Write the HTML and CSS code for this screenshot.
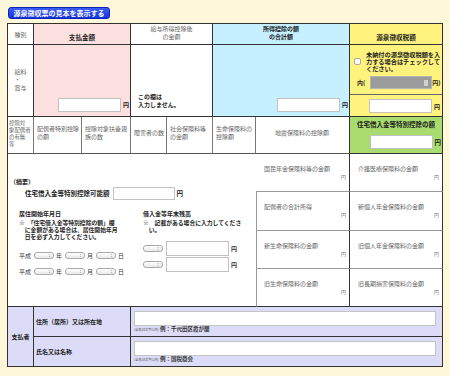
FILE: index.html
```html
<!DOCTYPE html>
<html lang="ja">
<head>
    <meta charset="UTF-8">
    <meta name="viewport" content="width=device-width, initial-scale=1.0">
    <title>源泉徴収票の入力</title>
    <link rel="stylesheet" href="styles.css">
</head>
<body>
    <button class="sample-btn" type="button">源泉徴収票の見本を表示する</button>

    <div class="slip">
        <!-- 見出し -->
        <div class="cell head gray">種別</div>
        <div class="cell head low bold pink c2">支払金額</div>
        <div class="cell head high gray c2">給与所得控除後<br>の金額</div>
        <div class="cell head high bold blue c2">所得控除の額<br>の合計額</div>
        <div class="cell head low bold yellow">源泉徴収税額</div>

        <!-- 給料・賞与 -->
        <div class="cell kind gray">給料<br>・<br>賞与</div>
        <div class="cell amount pink c2"><input class="amt" type="text"><span class="yen">円</span></div>
        <div class="cell noinput bold c2">この欄は<br>入力しません。</div>
        <div class="cell amount blue c2"><input class="amt" type="text"><span class="yen">円</span></div>
        <div class="cell tax yellow">
            <div class="tax-top">
                <label class="unpaid">
                    <input class="check" type="checkbox">
                    <span class="bold">未納付の源泉徴収税額を入力する場合はチェックしてください。</span>
                </label>
                <div class="unpaid-amt bold">内(<input class="amt locked" type="text" disabled><span>円)</span></div>
            </div>
            <div class="tax-bottom"><input class="amt" type="text"><span class="yen">円</span></div>
        </div>

        <!-- 控除の内訳 -->
        <div class="cell sub tight">控除対<br>象配偶者<br>の有無<br>等</div>
        <div class="cell sub">配偶者特別控除<br>の額</div>
        <div class="cell sub">控除対象扶養親<br>族の数</div>
        <div class="cell sub">障害者の数</div>
        <div class="cell sub">社会保険料等<br>の金額</div>
        <div class="cell sub">生命保険料の<br>控除額</div>
        <div class="cell sub center">地震保険料の控除額</div>
        <div class="cell loan green">
            <div class="bold">住宅借入金等特別控除の額</div>
            <div class="loan-input"><input class="amt" type="text"><span class="yen">円</span></div>
        </div>

        <!-- 摘要 -->
        <div class="cell summary">
            <div class="bold">（摘要）</div>
            <div class="sum-line">
                <span class="bold">住宅借入金等特別控除可能額</span>
                <input class="amt" type="text">
                <span class="yen">円</span>
            </div>
            <div class="sum-cols">
                <div class="sum-col left">
                    <div class="bold">居住開始年月日</div>
                    <p class="note">※　「住宅借入金等特別控除の額」欄に金額がある場合は、居住開始年月日を必ず入力してください。</p>
                    <div class="pick-row">平成<span class="popup"></span>年<span class="popup"></span>月<span class="popup"></span>日</div>
                    <div class="pick-row">平成<span class="popup"></span>年<span class="popup"></span>月<span class="popup"></span>日</div>
                </div>
                <div class="sum-col">
                    <div class="bold">借入金等年末残高</div>
                    <p class="note">※　記載がある場合に入力してください。</p>
                    <div class="pick-row"><span class="popup"></span><input class="amt mid" type="text"><span class="yen">円</span></div>
                    <div class="pick-row"><span class="popup"></span><input class="amt mid" type="text"><span class="yen">円</span></div>
                </div>
            </div>
        </div>
        <div class="cell ins first">国民年金保険料等の金額<span class="yen-s">円</span></div>
        <div class="cell ins outer">介護医療保険料の金額<span class="yen-s">円</span></div>
        <div class="cell ins">配偶者の合計所得<span class="yen-s">円</span></div>
        <div class="cell ins outer">新個人年金保険料の金額<span class="yen-s">円</span></div>
        <div class="cell ins">新生命保険料の金額<span class="yen-s">円</span></div>
        <div class="cell ins outer">旧個人年金保険料の金額<span class="yen-s">円</span></div>
        <div class="cell ins last">旧生命保険料の金額<span class="yen-s">円</span></div>
        <div class="cell ins outer last">旧長期損害保険料の金額<span class="yen-s">円</span></div>

        <!-- 支払者 -->
        <div class="cell payer-head bold">支払者</div>
        <div class="cell payer-label bold c2">住所（居所）又は所在地</div>
        <div class="cell payer-field c5">
            <input class="text-field" type="text">
            <div class="hint"><span class="limit">[全角28文字以内]</span> 例：千代田区霞が関</div>
        </div>
        <div class="cell payer-label bold c2">氏名又は名称</div>
        <div class="cell payer-field c5">
            <input class="text-field" type="text">
            <div class="hint"><span class="limit">[全角28文字以内]</span> 例：国税商会</div>
        </div>
    </div>
</body>
</html>
```

FILE: styles.css
```css
* {
    box-sizing: border-box;
}

body {
    margin: 0;
    padding: 7px 0 0 7px;
    background-color: #fff7da;
    font-family: "Noto Sans CJK JP", "Noto Sans", sans-serif;
    font-size: 6px;
    line-height: 7px;
    color: #222;
}

.sample-btn {
    display: block;
    width: 102px;
    height: 12px;
    margin: 0 0 4px 1px;
    padding: 0;
    border: 1px solid #0b22b8;
    border-radius: 3px;
    background: linear-gradient(#3b5df6, #1434e0);
    color: #fff;
    font-family: inherit;
    font-size: 7px;
    font-weight: bold;
    line-height: 10px;
}

.slip {
    display: grid;
    grid-template-columns: 26px 48px 49px 36px 46px 43px 94px 93px;
    grid-template-rows: 21px 72px 37px 38px 39px 38px 38px 30px 30px;
    width: 436px;
    border-top: 1px solid #333;
    border-left: 1px solid #333;
    background: #fff;
}

.cell {
    display: flex;
    border-right: 1px solid #333;
    border-bottom: 1px solid #333;
    min-width: 0;
}

.c2 { grid-column: span 2; }
.c5 { grid-column: span 5; }

.bold { font-weight: bold; color: #222; }
.gray { color: #666; }

.pink { background: #fcdfdf; }
.blue { background: #c6f0ff; }
.yellow { background: #fff37e; }
.green { background: #a8dc6e; }

input {
    margin: 0;
    padding: 0;
    font: inherit;
}

.amt {
    width: 63px;
    height: 14px;
    border: 1px solid #c2c2c2;
    background: #fff;
}

.amt.locked {
    width: 62px;
    height: 13px;
    background: #9b9b9b linear-gradient(#d0d0d0, #d0d0d0) no-repeat right 3px center / 4px 6px;
    border-color: #b5b5b5;
}

.amt.mid {
    height: 15px;
}

.yen {
    margin-left: 2px;
    font-weight: bold;
}

/* 見出し */
.head {
    align-items: center;
    justify-content: center;
    text-align: center;
}

.head.low { padding-top: 7px; font-size: 6.6px; }
.head.high { padding-bottom: 3px; line-height: 8px; }

.kind {
    flex-direction: column;
    justify-content: center;
    align-items: center;
    line-height: 8px;
    padding-bottom: 1px;
}

.amount {
    align-items: flex-end;
    justify-content: flex-end;
    padding: 0 1px 4px 0;
}

.amount .yen {
    line-height: 14px;
}

.noinput {
    align-items: flex-end;
    padding: 0 0 7px 7px;
    line-height: 8px;
}

/* 源泉徴収税額 */
.tax {
    flex-direction: column;
}

.tax-top {
    height: 50px;
    padding: 6px 0 0 4px;
    border-bottom: 1px solid #666;
}

.unpaid {
    display: flex;
    align-items: center;
    gap: 5px;
    font-size: 6.2px;
}

.unpaid span {
    width: 76px;
}

.check {
    appearance: none;
    width: 7px;
    height: 7px;
    margin: 0;
    border: 1px solid #aaa;
    border-radius: 2px;
    background: #fff;
}

.unpaid-amt {
    display: flex;
    align-items: center;
    margin-top: 4px;
    padding-left: 3px;
}

.unpaid-amt .amt {
    margin-left: 5px;
}

.tax-bottom {
    flex: 1;
    display: flex;
    align-items: center;
    justify-content: flex-end;
    padding: 1px 2px 0 0;
}

/* 控除の内訳 */
.sub {
    align-items: center;
    padding: 0 1px 4px 3px;
    color: #666;
    border-right-color: #777;
    border-bottom-color: #555;
    line-height: 8px;
}

.sub.tight {
    padding-left: 1px;
    padding-bottom: 3px;
    font-size: 5.4px;
    line-height: 7px;
}

.sub.center {
    justify-content: center;
    padding-left: 0;
    border-right-color: #333;
}

.loan {
    flex-direction: column;
    align-items: center;
    padding-top: 4px;
    font-size: 6.5px;
}

.loan-input {
    display: flex;
    align-items: center;
    align-self: flex-end;
    margin-top: 7px;
    padding-right: 1px;
}

/* 摘要 */
.summary {
    grid-column: 1 / 7;
    grid-row: 4 / 8;
    flex-direction: column;
    padding: 24px 0 0 2px;
    border-right: none;
}

.sum-line {
    display: flex;
    align-items: center;
    margin: 2px 0 0 15px;
    font-size: 6.5px;
}

.sum-line .amt {
    width: 62px;
    height: 13px;
    margin-left: 3px;
}

.sum-cols {
    display: flex;
    margin: 10px 0 0 9px;
}

.sum-col.left {
    width: 124px;
}

.note {
    width: 17.3em;
    margin: 2px 0 0;
    padding-left: 1em;
    text-indent: -1em;
    font-size: 5.8px;
    line-height: 7px;
    font-weight: bold;
}

.pick-row {
    display: flex;
    align-items: center;
    height: 16px;
    color: #333;
}

.note + .pick-row {
    margin-top: 7px;
}

.popup {
    position: relative;
    width: 20px;
    height: 7px;
    margin: 0 2px 0 3px;
    border: 1px solid #aaa;
    border-radius: 3px;
    background: linear-gradient(#fff, #e8e8e8);
}

.popup::after {
    content: ":";
    position: absolute;
    right: 3px;
    top: -1px;
    font-size: 5px;
    line-height: 6px;
    color: #555;
}

.sum-col:not(.left) .popup {
    margin: 0 3px 0 0;
}

/* 保険料等 */
.ins {
    flex-direction: column;
    padding: 11px 3px 0 8px;
    color: #666;
    border-bottom-color: #999;
}

.ins:not(.outer):not(.first) {
    border-left: 1px solid #999;
    padding-left: 7px;
}

.ins.last {
    border-bottom-color: #333;
}

.yen-s {
    align-self: flex-end;
    margin-top: 1px;
    font-size: 5px;
    color: #777;
}

/* 支払者 */
.payer-head,
.payer-label,
.payer-field {
    background: #dcdcf8;
}

.payer-head {
    grid-row: span 2;
    align-items: center;
    justify-content: center;
}

.payer-label {
    align-items: center;
    padding-left: 2px;
}

.payer-field {
    flex-direction: column;
    padding: 4px 6px 0 3px;
}

.text-field {
    width: 100%;
    height: 15px;
    border: 1px solid #c4c4c4;
    background: #fff;
}

.hint {
    font-size: 5.5px;
    line-height: 6px;
    font-weight: bold;
    color: #333;
}

.limit {
    font-size: 3.2px;
    font-weight: normal;
    color: #555;
}
```
